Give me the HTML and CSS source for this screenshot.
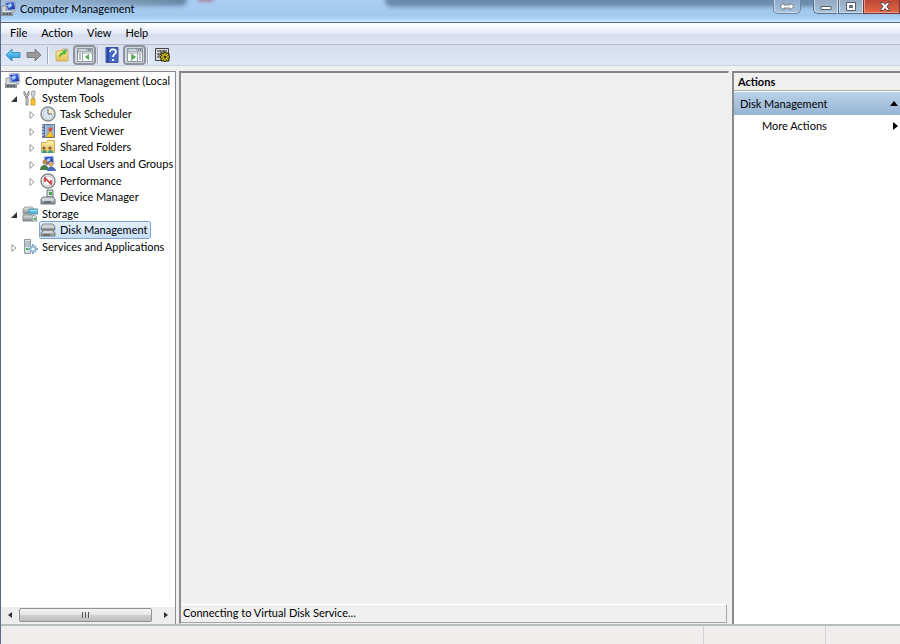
FILE: index.html
```
<!DOCTYPE html>
<html lang="en">
<head>
<meta charset="utf-8">
<title>Computer Management</title>
<link rel="stylesheet" href="styles.css">
</head>
<body>
<svg class="defs" aria-hidden="true">
  <defs>
    <linearGradient id="steel" x1="0" y1="0" x2="0" y2="1"><stop offset="0" stop-color="#e4e7e9"/><stop offset="1" stop-color="#7c8489"/></linearGradient>
    <linearGradient id="screen" x1="0" y1="0" x2="1" y2="1"><stop offset="0" stop-color="#2438b8"/><stop offset=".5" stop-color="#3460dc"/><stop offset="1" stop-color="#101f80"/></linearGradient>
    <linearGradient id="blue" x1="0" y1="0" x2="0" y2="1"><stop offset="0" stop-color="#8bdcff"/><stop offset="1" stop-color="#128bd8"/></linearGradient>
    <linearGradient id="folder" x1="0" y1="0" x2="0" y2="1"><stop offset="0" stop-color="#fff0aa"/><stop offset="1" stop-color="#e6bd55"/></linearGradient>
    <symbol id="computer" viewBox="0 0 16 16">
      <path d="M4 1l10-1 1 9-9 1z" fill="#c5cfdf" stroke="#8793aa" stroke-width=".6"/><path d="M5 2l8-1 1 7-7 1z" fill="url(#screen)"/><path d="M6 4l4-2 1 3-3 2z" fill="#a9caff"/>
      <path d="M1 5h4v6H1z" fill="#d9dddf" stroke="#777" stroke-width=".7"/><path d="M0 10h12v5H0z" fill="#8d9599"/><path d="M1 10h10v1H1z" fill="#dce1e2"/><path d="M2 12h2v2H2zm3 0h2v2H5zm3 0h2v2H8z" fill="#56606a"/><path d="M11 9l3 1v2h-3z" fill="#aeb5bb"/>
    </symbol>
    <symbol id="collapsed" viewBox="0 0 8 8"><path d="M2 .5L6 4 2 7.500z" fill="#fff" stroke="#999"/></symbol>
    <symbol id="expanded" viewBox="0 0 8 8"><path d="M7 1v6H1z" fill="#333"/></symbol>
  </defs>
</svg>
<div class="window">
  <header class="titlebar">
    <span class="blur blur-left"></span><span class="blur blur-right"></span><span class="blur blur-red"></span>
    <svg class="icon title-icon" viewBox="0 0 16 16"><use href="#computer"/></svg>
    <h1>Computer Management</h1>
    <div class="caption">
      <button class="cap resize" aria-label="Resize"><svg width="16" height="9" viewBox="0 0 16 9"><path d="M1 4.500L5 1v2h6V1l4 3.500L11 8V6H5v2z" fill="#fff" stroke="#7b8085"/></svg></button>
      <div class="cap-group">
        <button class="cap" aria-label="Minimize"><svg width="12" height="9" viewBox="0 0 12 9"><path d="M1 4.500h10v3H1z" fill="#fff" stroke="#525e6c"/></svg></button>
        <button class="cap" aria-label="Maximize"><svg width="12" height="9" viewBox="0 0 12 9"><path d="M1.500.500h9v8h-9z" fill="#fff" stroke="#525e6c"/><path d="M4.500 3.500h3v2h-3z" fill="#8296b0" stroke="#525e6c"/></svg></button>
        <button class="cap close" aria-label="Close"><svg width="12" height="10" viewBox="0 0 12 10"><path d="M1 .5h3l2 2 2-2h3L8 4.500l3 4H8l-2-2-2 2H1l3-4z" fill="#fff" stroke="#5b464d"/></svg></button>
      </div>
    </div>
  </header>
  <nav class="menubar" aria-label="Menu"><button>File</button><button>Action</button><button>View</button><button>Help</button></nav>
  <div class="toolbar" role="toolbar" aria-label="Tools">
    <div class="history">
      <button class="tool" aria-label="Back"><svg width="16" height="14" viewBox="0 0 16 14"><path d="M1 7l6-6v3.500h8v5H7V13z" fill="url(#blue)" stroke="#3d93bd"/></svg></button>
      <button class="tool" aria-label="Forward"><svg width="16" height="14" viewBox="0 0 16 14"><path d="M15 7L9 1v3.500H1v5h8V13z" fill="#97999b" stroke="#7b7d80"/></svg></button>
    </div>
    <span class="sep"></span>
    <button class="tool" aria-label="Up one level"><svg width="16" height="16" viewBox="0 0 16 16"><path d="M2 4h5l1-2h6v12H2z" fill="url(#folder)" stroke="#d0b267"/><path d="M10 2h3v2h-3z" fill="#7db3cc"/><path d="M5 11c0-4 1-5 4-6L8 3l5 1-2 4-1-1c-3 1-3 2-5 4z" fill="#55b835"/></svg></button>
    <button class="tool pressed" aria-label="Show console tree" aria-pressed="true"><svg width="16" height="14" viewBox="0 0 16 14"><path d="M.5.500h15v13H.5z" fill="#f8f9f9" stroke="#8d959c"/><path d="M1 1h14v3H1z" fill="#aab5bf"/><path d="M2 2h7" stroke="#edf3f8"/><path d="M11 2h1m1 0h1" stroke="#405365"/><path d="M5.500 4v9M1 5h14" stroke="#a0a8ad"/><path d="M2 7h2m-2 2h2m-2 2h2" stroke="#768799"/><path d="M12 6v6L8 9z" fill="#45ad3e"/></svg></button>
    <span class="sep"></span>
    <button class="tool" aria-label="Help"><svg width="14" height="16" viewBox="0 0 14 16"><path d="M1 .5h12v15H1z" fill="#4668c5" stroke="#40569b"/><path d="M2 1h2v14H2z" fill="#2947a0"/><path d="M5 5c0-4 6-3 6 0 0 2-3 2-3 5" fill="none" stroke="#fff" stroke-width="1.700"/><path d="M7 12h2v2H7z" fill="#fff"/></svg></button>
    <button class="tool pressed" aria-label="Show action pane" aria-pressed="true"><svg width="16" height="14" viewBox="0 0 16 14"><path d="M.5.500h15v13H.5z" fill="#f8f9f9" stroke="#8d959c"/><path d="M1 1h14v3H1z" fill="#aab5bf"/><path d="M2 2h7" stroke="#edf3f8"/><path d="M11 2h1m1 0h1" stroke="#405365"/><path d="M10.500 4v9M1 5h14M4.500 5v8" stroke="#a0a8ad"/><path d="M12 7h2m-2 2h2m-2 2h2" stroke="#768799"/><path d="M5 6v6l4-3z" fill="#45ad3e"/></svg></button>
    <span class="sep"></span>
    <button class="tool" aria-label="Settings"><svg width="16" height="16" viewBox="0 0 16 16"><path d="M1.500 1.500h13v12h-13z" fill="#ddd" stroke="#444"/><path d="M3 4h4m1 0h5M3 7h2m1 0h3M3 10h3M7 3v3m3-3v3M5 6v3" stroke="#333"/><path d="M11 5v10M6 10h10M7 6l8 8m0-8l-8 8" stroke="#38360a" stroke-width="3"/><path d="M11 6v8M7 10h8M8 7l6 6m0-6l-6 6" stroke="#d9c916" stroke-width="1.500"/><circle cx="11" cy="10" r="1.500" fill="#333"/></svg></button>
  </div>
  <main class="workspace">
    <section class="pane tree-pane" aria-label="Console tree">
      <ul class="tree">
        <li class="row root"><svg class="icon" viewBox="0 0 16 16"><use href="#computer"/></svg><span>Computer Management (Local</span></li>
        <li class="row level1"><svg class="arrow"><use href="#expanded"/></svg><svg class="icon" viewBox="0 0 16 16"><path d="M2 1v4l2 2h1l2-2V1L5.500 3v2h-2V3zM4 7h2v8H4z" fill="#d5d8da" stroke="#777" stroke-width=".8"/><path d="M10 1h3v3l-1 2v3h-2V6L9 4z" fill="#d3d7da" stroke="#888" stroke-width=".7"/><path d="M9 9h4v6H9z" fill="#ffc629" stroke="#c58a13" stroke-width=".7"/></svg><span>System Tools</span></li>
        <li class="row level2"><svg class="arrow"><use href="#collapsed"/></svg><svg class="icon" viewBox="0 0 16 16"><circle cx="8" cy="8" r="7" fill="#f5f3e8" stroke="#858d95" stroke-width="1.500"/><circle cx="8" cy="8" r="5.200" fill="#dae6ef" stroke="#bfc9d1"/><path d="M8 8h5A5 5 0 0 0 8 3z" fill="#fff0bd"/><path d="M8 3v5h4" fill="none" stroke="#5a6570"/></svg><span>Task Scheduler</span></li>
        <li class="row level2"><svg class="arrow"><use href="#collapsed"/></svg><svg class="icon" viewBox="0 0 16 16"><path d="M2.500 1.500h12v13h-12z" fill="#a7bdd9" stroke="#657999"/><path d="M3 2h2v12H3z" fill="#596d96"/><path d="M1 3h3M1 6h3M1 9h3M1 12h3" stroke="#e5edf4"/><path d="M7 3h6M7 5h6M7 7h3M7 9h3" stroke="#8295b0"/><circle cx="10.500" cy="6.500" r="2" fill="#d94b3e"/><path d="M10 8l4 6H6z" fill="#ffca27" stroke="#be8612" stroke-width=".6"/></svg><span>Event Viewer</span></li>
        <li class="row level2"><svg class="arrow"><use href="#collapsed"/></svg><svg class="icon" viewBox="0 0 16 16"><path d="M1.500 3.500h5l1-2h7v12h-13z" fill="url(#folder)" stroke="#d0ad61"/><path d="M2 14c0-4 5-4 5 0zm6 0c0-4 5-4 5 0z" fill="#3c9785"/><circle cx="4" cy="9" r="1.600" fill="#875832"/><circle cx="10" cy="9" r="1.600" fill="#875832"/></svg><span>Shared Folders</span></li>
        <li class="row level2"><svg class="arrow"><use href="#collapsed"/></svg><svg class="icon" viewBox="0 0 16 16"><path d="M4 1l9-1 1 8-8 1z" fill="url(#screen)" stroke="#aab8d4"/><path d="M7 3l3-1v3L7 6z" fill="#b6d1ff"/><circle cx="5" cy="6" r="2.500" fill="#b9854d"/><path d="M0 14c0-6 8-7 9 0z" fill="#477e4c"/><circle cx="11" cy="8" r="2.500" fill="#d7a76d"/><path d="M7 15c0-6 8-6 9 0z" fill="#456cb4"/></svg><span>Local Users and Groups</span></li>
        <li class="row level2"><svg class="arrow"><use href="#collapsed"/></svg><svg class="icon" viewBox="0 0 16 16"><circle cx="8" cy="8" r="7" fill="#fff" stroke="#858b8e" stroke-width="1.500"/><circle cx="8" cy="8" r="5" fill="#fafafa" stroke="#b7babb"/><path d="M5 9V5l6 6V7" fill="none" stroke="#cd2c2b" stroke-width="1.500"/></svg><span>Performance</span></li>
        <li class="row level2"><span class="arrow"></span><svg class="icon" viewBox="0 0 16 16"><path d="M7 1h6v7H7z" fill="#d8dddd" stroke="#6f7779"/><path d="M9 3h3v3H9z" fill="#48a64d"/><path d="M3 8h10l2 2v5H1v-5z" fill="url(#steel)" stroke="#6c7478"/><path d="M2 11h12" stroke="#e9eded"/><path d="M4 13h7" stroke="#38464b"/></svg><span>Device Manager</span></li>
        <li class="row level1"><svg class="arrow"><use href="#expanded"/></svg><svg class="icon" viewBox="0 0 16 16"><path d="M1 3l2-2h7l2 2v5H1z" fill="url(#steel)" stroke="#9ba1a4"/><path d="M1 9h9l2 2v4H1z" fill="url(#steel)" stroke="#858b8f"/><path d="M7 3h9v5H7z" fill="#50b9de" stroke="#6496a7"/><path d="M8 4h7v1H8z" fill="#b5edff"/><path d="M10 9l4 1 1 5h-4z" fill="#e1e6e7" stroke="#9fa4a7"/><path d="M12 12h2v2h-2z" fill="#43bf37"/></svg><span>Storage</span></li>
        <li class="row level2"><span class="arrow"></span><span class="selection"><svg class="icon" viewBox="0 0 16 16"><path d="M3 2h10l2 3v3H1V5z" fill="url(#steel)" stroke="#858585"/><path d="M2 5h12" stroke="#f0f1f1"/><path d="M3 8h10l2 3v3H1v-3z" fill="#9da2a3" stroke="#777c7e"/><path d="M4 9h8l2 2H2z" fill="#d8dada"/><path d="M3 13h7" stroke="#444"/><path d="M12 12h2v1h-2z" fill="#73c776"/></svg><span>Disk Management</span></span></li>
        <li class="row level1"><svg class="arrow"><use href="#collapsed"/></svg><svg class="icon" viewBox="0 0 16 16"><path d="M2.500.500h6v14h-6z" fill="#dbe1e4" stroke="#8f9aa0"/><path d="M3 3h5M3 5h5M3 7h5" stroke="#8aa5b2"/><path d="M4 10h2" stroke="#41b846" stroke-width="2"/><path d="M11 5v10M6 10h10M8 7l6 6m0-6l-6 6" stroke="#89a9c5" stroke-width="2"/><circle cx="11" cy="10" r="3" fill="#9abad4"/><circle cx="11" cy="10" r="1.500" fill="#fff"/></svg><span>Services and Applications</span></li>
      </ul>
      <div class="scrollbar">
        <button aria-label="Scroll left"><svg width="4" height="6" viewBox="0 0 4 6"><path d="M4 0v6L0 3z" fill="#333"/></svg></button>
        <div class="thumb"><span></span><span></span><span></span></div>
        <button aria-label="Scroll right"><svg width="4" height="6" viewBox="0 0 4 6"><path d="M0 0v6l4-3z" fill="#333"/></svg></button>
      </div>
    </section>
    <section class="pane content"><p class="message">Connecting to Virtual Disk Service...</p></section>
    <aside class="pane actions">
      <h2>Actions</h2>
      <button class="action-head"><span>Disk Management</span><svg width="8" height="5" viewBox="0 0 8 5"><path d="M0 5l4-5 4 5z"/></svg></button>
      <button class="action-item"><span>More Actions</span><svg width="5" height="8" viewBox="0 0 5 8"><path d="M0 0l5 4-5 4z"/></svg></button>
    </aside>
  </main>
  <footer class="statusbar"><span></span><span></span><span></span></footer>
</div>
</body>
</html>
```
FILE: styles.css
```
* { box-sizing: border-box; }
body { margin: 0; font: 11px/16px Lato, "Open Sans", sans-serif; color: #000; overflow: hidden; }
button { font: inherit; color: inherit; margin: 0; padding: 0; border: 0; background: none; }
h1, h2, p, ul { margin: 0; padding: 0; font: inherit; }
svg { display: block; flex: none; }
.defs { position: absolute; width: 0; height: 0; }
.window { display: flex; flex-direction: column; height: 100vh; border-left: 1px solid #566c88; background: #f0f0f0; }

.titlebar { position: relative; display: flex; flex: none; height: 23px; gap: 3px; overflow: hidden; border-bottom: 1px solid #52657c; background: linear-gradient(#abcff3, #a2c8ef 70%, #b5d9fa 90%, #dcf0ff); }
.titlebar > * { position: relative; }
.titlebar .blur { position: absolute; filter: blur(2px); background: #6c8aaa; }
.titlebar .blur-left { left: -5px; top: -10px; width: 191px; height: 16px; border-radius: 6px; background: linear-gradient(90deg, #a2c0dc, #87a5c2 50%, #6786a5); }
.titlebar .blur-right { left: 384px; right: -10px; top: -10px; height: 17px; border-radius: 6px; }
.titlebar .blur-red { left: 197px; top: -5px; width: 15px; height: 6px; background: #a76886; }
.icon { width: 16px; height: 16px; }
.title-icon { margin-top: 1px; }
.titlebar h1 { margin-top: 1px; }
.caption { display: flex; gap: 12px; margin-left: auto; }
.cap-group { display: flex; }
.cap { display: grid; place-items: center; width: 25px; height: 14px; border: 1px solid #576d87; border-top: 0; border-right-color: #d0e0ee; background: linear-gradient(#95aac1, #a9c2dc); box-shadow: inset 1px -1px #c9d9e8; }
.cap-group .cap:first-child { border-bottom-left-radius: 5px; }
.resize { width: 28px; border-radius: 0 0 5px 5px; border-color: #6d86a3; background: linear-gradient(#8fabc8, #a7c5e4); }
.close { width: 37px; padding-left: 7px; border-color: #77333a; background: linear-gradient(#bd4734, #e36845); box-shadow: inset 1px -1px #e39c8b; }

.menubar { display: flex; flex: none; height: 22px; padding-left: 2px; background: linear-gradient(#fff, #e3e9f5 50%, #d5dcee 51%, #dfe5f4); border-bottom: 1px solid #b7bdcf; }
.menubar button { padding: 0 7px; height: 20px; }
.toolbar { display: flex; flex: none; align-items: center; height: 21px; padding-left: 2px; gap: 1px; background: linear-gradient(#d7deee, #dfe6f6); border-bottom: 1px solid #ccd1dd; }
.history { display: flex; gap: 1px; padding-right: 2px; }
.tool { display: grid; place-items: center; width: 20px; height: 20px; }
.pressed { width: 23px; border: 2px solid #8d949d; border-radius: 4px; background: #d2d7df; }
.sep { width: 2px; height: 17px; background: #a3a9b5; border-right: 1px solid #f4f7ff; margin-right: 2px; }

.workspace { flex: 1; min-height: 0; display: grid; grid-template-columns: 175px minmax(0, 1fr) 168px; gap: 3px; padding-top: 5px; }
.pane { min-width: 0; border: 2px solid #898b8e; border-top-color: #858585; }
.tree-pane { display: flex; flex-direction: column; justify-content: space-between; overflow: hidden; border-width: 1px 1px 0 0; background: #fff; }
.tree { display: flex; flex-direction: column; justify-content: space-between; height: 183px; padding-top: 1px; list-style: none; }
.row { display: flex; align-items: center; height: 16px; white-space: nowrap; }
.root { padding-left: 4px; gap: 4px; }
.level1 { padding-left: 9px; gap: 4px; }
.level2 { padding-left: 27px; gap: 4px; }
.arrow { width: 8px; height: 8px; flex: none; margin-top: 2px; }
.selection { display: flex; align-items: center; height: 16px; gap: 4px; padding-right: 3px; border-radius: 2px; background: linear-gradient(#e3effd, #c6ddf8); box-shadow: 0 0 0 1px #7da2ce; }
.scrollbar { display: flex; align-items: center; height: 17px; padding-bottom: 2px; background: #eee; }
.scrollbar button { display: grid; place-items: center; width: 18px; height: 15px; }
.scrollbar button:last-child { width: 23px; padding-left: 5px; }
.thumb { flex: 1; height: 14px; display: flex; align-items: center; justify-content: center; gap: 1px; border: 1px solid #929292; border-radius: 2px; background: linear-gradient(#f4f4f4, #e5e5e5 49%, #d0d0d0 50%, #bebebe); }
.thumb span { width: 2px; height: 6px; border-left: 1px solid #555; background: #ddd; }
.content { display: flex; flex-direction: column; justify-content: flex-end; border-width: 2px 1px 1px 2px; border-right-color: #eee; border-bottom-color: #eee; background: #f0f0f0; }
.message { height: 19px; padding: 0 2px; border: 1px solid #a5a5a5; border-top-color: #fff; border-left: 0; margin-right: 1px; }
.actions { display: flex; flex-direction: column; border-width: 2px 0 0 2px; background: #fff; }
.actions h2 { height: 18px; padding: 1px 4px; border-bottom: 1px solid #aaa; background: #f0f0f0; font-weight: 700; }
.action-head { display: flex; align-items: center; justify-content: space-between; height: 23px; margin-top: 1px; padding: 0 2px 0 6px; background: linear-gradient(#bad2e9, #97b4d4); }
.action-item { display: flex; align-items: center; justify-content: space-between; height: 22px; padding: 0 2px 0 28px; }

.statusbar { display: grid; grid-template-columns: minmax(0, 1fr) 122px 75px; flex: none; height: 20px; border-top: 2px solid #b7bcbd; background: #f0edec; }
.statusbar span + span { border-left: 1px solid #d3d3d3; }
```
